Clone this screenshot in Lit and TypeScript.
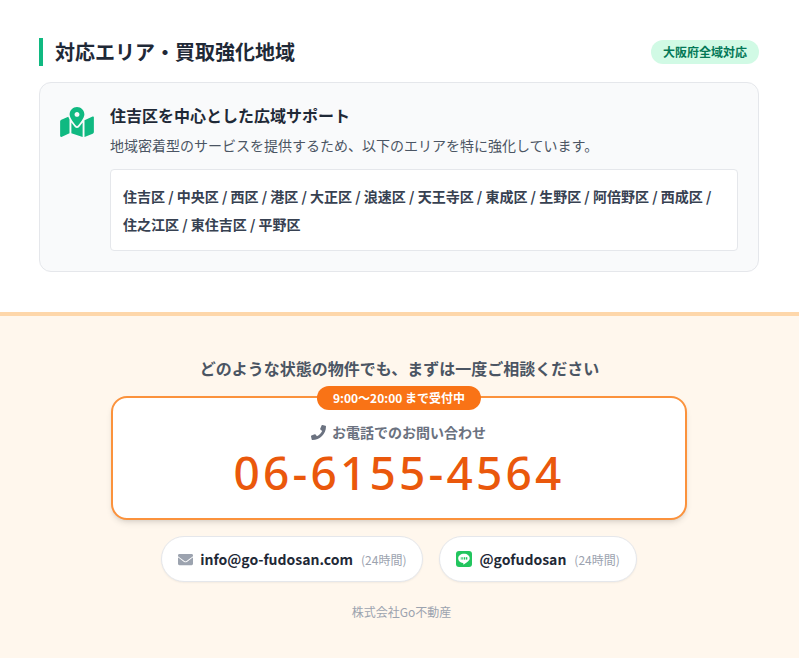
import { LitElement, html, css } from 'lit';
import { customElement } from 'lit/decorators.js';

@customElement('app-root')
export class AppRoot extends LitElement {
  static styles = css`
    :host {
      display: block;
      font-family: 'Noto Sans CJK JP', 'Noto Sans', sans-serif;
      color: #1f2937;
      background: #fff;
    }
    .area {
      padding: 38px 40px 40px 39px;
    }
    .area-head {
      display: flex;
      align-items: center;
      justify-content: space-between;
      margin-bottom: 16px;
    }
    .area-title {
      margin: 0;
      border-left: 4px solid #10b981;
      padding-left: 12px;
      font-size: 20px;
      line-height: 28px;
      font-weight: 700;
    }
    .pref {
      background: #d1fae5;
      color: #047857;
      font-size: 12px;
      line-height: 16px;
      font-weight: 700;
      padding: 4px 12px;
      border-radius: 999px;
    }
    .area-card {
      display: flex;
      gap: 16px;
      background: #f9fafb;
      border: 1px solid #e5e7eb;
      border-radius: 12px;
      padding: 20px;
    }
    .map-icon {
      width: 34px;
      height: 30px;
      margin-top: 4px;
      flex: none;
      fill: #10b981;
    }
    .area-body {
      flex: 1;
    }
    .area-sub {
      margin: 0 0 8px;
      font-size: 16px;
      line-height: 24px;
      font-weight: 700;
    }
    .area-text {
      margin: 0 0 14px;
      font-size: 14px;
      line-height: 20px;
      color: #4b5563;
    }
    .wards {
      background: #fff;
      border: 1px solid #e5e7eb;
      border-radius: 4px;
      padding: 12px;
      font-size: 14px;
      line-height: 28px;
      font-weight: 700;
      color: #374151;
    }
    .contact {
      background: #fff7ed;
      border-top: 4px solid #fed7aa;
      padding: 40px 0 38px;
      display: flex;
      flex-direction: column;
      align-items: center;
    }
    .lead {
      margin: 0 0 16px;
      font-size: 16px;
      line-height: 24px;
      font-weight: 700;
      color: #4b5563;
    }
    .tel-card {
      position: relative;
      box-sizing: border-box;
      width: 576px;
      height: 124px;
      margin-right: 1px;
      background: #fff;
      border: 2px solid #fb923c;
      border-radius: 16px;
      box-shadow: 0 4px 6px -1px rgba(0, 0, 0, 0.1), 0 2px 4px -2px rgba(0, 0, 0, 0.1);
      display: flex;
      flex-direction: column;
      align-items: center;
      padding-top: 24px;
    }
    .hours {
      position: absolute;
      top: -12px;
      left: 50%;
      transform: translateX(-50%);
      white-space: nowrap;
      background: #f97316;
      color: #fff;
      font-size: 12px;
      line-height: 16px;
      font-weight: 700;
      padding: 4px 16px;
      border-radius: 999px;
    }
    .tel-label {
      display: flex;
      align-items: center;
      gap: 6px;
      margin-right: 1px;
      font-size: 14px;
      line-height: 20px;
      font-weight: 700;
      color: #6b7280;
    }
    .tel-label svg {
      width: 15px;
      height: 15px;
      fill: #6b7280;
    }
    .tel-number {
      font-family: 'Noto Sans', sans-serif;
      font-size: 46px;
      line-height: 46px;
      font-weight: 500;
      letter-spacing: 3.2px;
      color: #ea580c;
      margin-top: 7px;
    }
    .links {
      display: flex;
      gap: 16px;
      margin-top: 16px;
      margin-right: 1px;
    }
    .link {
      display: flex;
      align-items: center;
      height: 44px;
      padding: 0 16px;
      background: #fff;
      border: 1px solid #e5e7eb;
      border-radius: 999px;
      box-shadow: 0 1px 2px rgba(0, 0, 0, 0.05);
    }
    .mail-icon {
      width: 15px;
      height: 15px;
      flex: none;
      margin-right: 7px;
      fill: #9ca3af;
    }
    .line-icon {
      width: 16px;
      height: 16px;
      flex: none;
      margin-right: 7px;
    }
    .link b {
      font-size: 14px;
      font-weight: 700;
      color: #1f2937;
    }
    .link span {
      font-size: 12px;
      color: #9ca3af;
      margin-left: 8px;
    }
    .company {
      margin-top: 22px;
      padding-left: 4px;
      font-size: 12px;
      line-height: 16px;
      color: #9ca3af;
    }
  `;

  render() {
    return html`
      <section class="area">
        <div class="area-head">
          <h2 class="area-title">対応エリア・買取強化地域</h2>
          <span class="pref">大阪府全域対応</span>
        </div>
        <div class="area-card">
          <svg class="map-icon" viewBox="0 0 576 512">
            <path
              d="M288 0c-69.590 0-126 56.410-126 126 0 56.260 82.350 158.800 113.900 196.020 6.390 7.540 17.820 7.540 24.200 0C331.650 284.800 414 182.260 414 126 414 56.410 357.590 0 288 0zm0 168c-23.200 0-42-18.800-42-42s18.800-42 42-42 42 18.800 42 42-18.800 42-42 42zM20.120 215.950A32.006 32.006 0 0 0 0 245.660v250.320c0 11.320 11.430 19.060 21.940 14.860L160 448V214.920c-8.840-15.980-16.070-31.540-21.250-46.420L20.120 215.950zM288 359.670c-14.070 0-27.380-6.180-36.510-16.950-19.660-23.200-40.570-49.620-59.490-76.720v182l192 64V266c-18.920 27.090-39.820 53.520-59.490 76.720-9.130 10.770-22.440 16.950-36.510 16.950zm266.060-198.510L416 224v288l139.880-55.950A31.996 31.996 0 0 0 576 426.340V176.020c0-11.320-11.430-19.060-21.940-14.860z"
            />
          </svg>
          <div class="area-body">
            <h3 class="area-sub">住吉区を中心とした広域サポート</h3>
            <p class="area-text">地域密着型のサービスを提供するため、以下のエリアを特に強化しています。</p>
            <div class="wards">
              住吉区 / 中央区 / 西区 / 港区 / 大正区 / 浪速区 / 天王寺区 / 東成区 / 生野区 / 阿倍野区 / 西成区 / 住之江区 / 東住吉区 / 平野区
            </div>
          </div>
        </div>
      </section>
      <section class="contact">
        <p class="lead">どのような状態の物件でも、まずは一度ご相談ください</p>
        <div class="tel-card">
          <div class="hours">9:00〜20:00 まで受付中</div>
          <div class="tel-label">
            <svg viewBox="0 0 512 512">
              <path
                d="M493.4 24.6l-104-24c-11.3-2.6-22.9 3.3-27.5 13.9l-48 112c-4.2 9.8-1.4 21.3 6.9 28l60.6 49.6c-36 76.7-98.9 140.5-177.2 177.2l-49.6-60.6c-6.8-8.3-18.2-11.1-28-6.9l-112 48C3.9 366.5-2 378.1.6 389.4l24 104C27.1 504.2 36.7 512 48 512c256.1 0 464-207.5 464-464 0-11.2-7.7-20.9-18.6-23.4z"
              />
            </svg>
            お電話でのお問い合わせ
          </div>
          <div class="tel-number">06-6155-4564</div>
        </div>
        <div class="links">
          <div class="link">
            <svg class="mail-icon" viewBox="0 0 512 512">
              <path
                d="M502.3 190.800c3.900-3.100 9.700-.2 9.700 4.700V400c0 26.500-21.500 48-48 48H48c-26.500 0-48-21.500-48-48V195.600c0-5 5.700-7.800 9.700-4.700 22.400 17.400 52.100 39.500 154.100 113.600 21.100 15.400 56.700 47.800 92.200 47.600 35.700.3 72-32.800 92.300-47.600 102-74.100 131.600-96.300 154-113.700zM256 320c23.200.4 56.600-29.200 73.400-41.400 132.700-96.300 142.800-104.700 173.400-128.700 5.800-4.500 9.200-11.500 9.200-18.900v-19c0-26.500-21.500-48-48-48H48C21.500 64 0 85.500 0 112v19c0 7.400 3.400 14.300 9.200 18.900 30.600 23.900 40.700 32.400 173.400 128.700 16.800 12.200 50.200 41.800 73.400 41.400z"
              />
            </svg>
            <b>info@go-fudosan.com</b><span>(24時間)</span>
          </div>
          <div class="link">
            <svg class="line-icon" viewBox="0 0 16 16">
              <rect width="16" height="16" rx="3" fill="#22c55e" />
              <path
                d="M8 2.800C4.700 2.800 2.200 4.900 2.200 7.500c0 2.300 2 4.200 4.700 4.600.6.100.5.600.4 1.100 0 .3.200.4.500.2 1.700-1 4.100-2.700 5-3.900.6-.6.900-1.300.9-2C13.800 4.900 11.300 2.800 8 2.800z"
                fill="#fff"
              />
              <g fill="#22c55e">
                <rect x="4.800" y="6.200" width="0.800" height="2.400" />
                <rect x="6.300" y="6.200" width="0.700" height="2.400" />
                <rect x="7.700" y="6.200" width="1.600" height="2.400" />
                <rect x="10" y="6.200" width="1.300" height="2.400" />
              </g>
            </svg>
            <b>@gofudosan</b><span>(24時間)</span>
          </div>
        </div>
        <div class="company">株式会社Go不動産</div>
      </section>
    `;
  }
}
